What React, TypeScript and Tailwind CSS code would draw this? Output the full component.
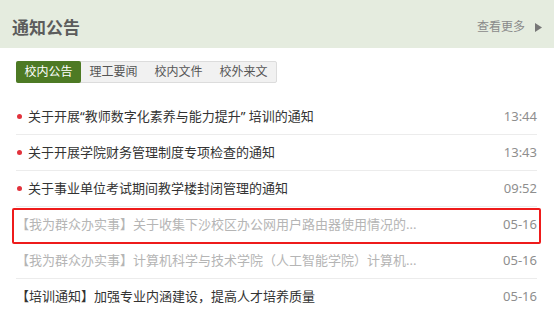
import React from "react";

const font = { fontFamily: '"Noto Sans", "Noto Sans CJK SC", sans-serif' };

type Row = { text: string; time: string; dot?: boolean; tone: "dark" | "light"; highlight?: boolean };

const rows: Row[] = [
  { text: "关于开展“教师数字化素养与能力提升” 培训的通知", time: "13:44", dot: true, tone: "dark" },
  { text: "关于开展学院财务管理制度专项检查的通知", time: "13:43", dot: true, tone: "dark" },
  { text: "关于事业单位考试期间教学楼封闭管理的通知", time: "09:52", dot: true, tone: "dark" },
  { text: "【我为群众办实事】关于收集下沙校区办公网用户路由器使用情况的...", time: "05-16", tone: "light", highlight: true },
  { text: "【我为群众办实事】计算机科学与技术学院（人工智能学院）计算机...", time: "05-16", tone: "light" },
  { text: "【培训通知】加强专业内涵建设，提高人才培养质量", time: "05-16", tone: "dark" },
];

const tabs = ["校内公告", "理工要闻", "校内文件", "校外来文"];

export default function App() {
  return (
    <div className="w-[554px] h-[316px] bg-white overflow-hidden" style={font}>
      <div className="h-[48px] bg-[#e5ecdf] flex items-center justify-between pl-[12px] pr-[12px] pt-[6px]">
        <span className="text-[17px] font-bold text-[#5c5c5c] leading-none">通知公告</span>
        <span className="flex items-center gap-[10px] text-[12px] text-[#8a8a8a] leading-none">
          查看更多
          <svg width="7" height="9" viewBox="0 0 7 9">
            <path d="M0 0 L7 4.5 L0 9 Z" fill="#777" />
          </svg>
        </span>
      </div>
      <div className="pl-[16px] pt-[10px]">
        <div className="inline-flex h-[22px] border border-[#dcdcdc] bg-[#f1f1f1] rounded-[2px]">
          {tabs.map((t, i) => (
            <span
              key={t}
              className={
                i === 0
                  ? "px-[8.5px] flex items-center text-[12px] text-white bg-[#4d7a24] rounded-[2px] -my-px -ml-px"
                  : "px-[8.5px] flex items-center text-[12px] text-[#555]"
              }
            >
              {t}
            </span>
          ))}
        </div>
      </div>
      <div className="pl-[16px] pr-[17px] mt-[16px]">
        {rows.map((r, i) => (
          <div
            key={i}
            className={
              "relative h-[36px] flex items-center justify-between text-[13px] " +
              (i < rows.length - 1 ? "border-b border-[#ececec]" : "")
            }
          >
            <div className="flex items-center min-w-0">
              {r.dot && <span className="w-[5px] h-[5px] rounded-full bg-[#e2323c] ml-[1px] mr-[6px] shrink-0" />}
              <span className={r.tone === "dark" ? "text-[#333]" : "text-[#b5b5b5]"}>{r.text}</span>
            </div>
            <span className="text-[#8e8e8e] shrink-0">{r.time}</span>
            {r.highlight && (
              <span className="absolute left-[-4px] right-[-4px] top-[1px] bottom-[-2px] border-2 border-[#ee1b1b] rounded-[2px] pointer-events-none" />
            )}
          </div>
        ))}
      </div>
    </div>
  );
}
